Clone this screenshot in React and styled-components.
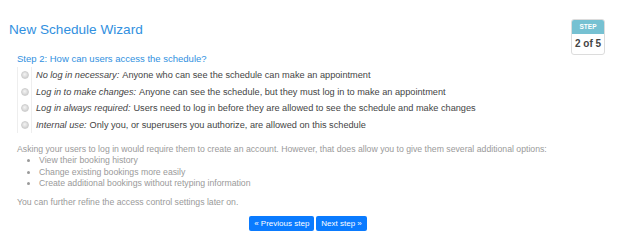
import React from "react";
import styled, { createGlobalStyle } from "styled-components";

const Global = createGlobalStyle`
  html, body { margin: 0; padding: 0; background: #fff; }
  body { font-family: "Liberation Sans", Arial, sans-serif; }
`;

const Page = styled.div`
  width: 620px;
  height: 247px;
  box-sizing: border-box;
  padding: 19px 15px 0 9px;
`;

const Header = styled.div`
  display: flex;
  justify-content: space-between;
  align-items: flex-start;
  margin-bottom: -2px;
`;

const Title = styled.h1`
  margin: 3px 0 0 0;
  font-weight: normal;
  font-size: 13.6px;
  line-height: 16px;
  color: #3190e0;
`;

const StepBadge = styled.div`
  width: 34px;
  box-sizing: border-box;
  border: 1px solid #dcdcdc;
  border-radius: 3px;
  overflow: hidden;
  text-align: center;
`;

const StepHead = styled.div`
  background: #76c1d2;
  color: #fff;
  font-size: 6.5px;
  font-weight: bold;
  height: 14px;
  line-height: 14px;
`;

const StepBody = styled.div`
  color: #444;
  font-size: 10px;
  font-weight: bold;
  height: 20px;
  line-height: 20px;
`;

const Content = styled.div`
  padding-left: 8px;
`;

const Question = styled.h2`
  margin: 0;
  font-weight: normal;
  font-size: 9.5px;
  line-height: 12px;
  color: #3190e0;
`;

const Options = styled.div`
  margin-top: 1.5px;
  display: flex;
  flex-direction: column;
`;

const Option = styled.label`
  display: flex;
  align-items: center;
  height: 16.7px;
  font-size: 9.2px;
  color: #444;
`;

const RadioCell = styled.span`
  width: 15px;
  height: 100%;
  display: flex;
  align-items: center;
  justify-content: center;
  border-left: 1px solid #eee;
  border-right: 1px solid #eee;
  margin-right: 4px;
  box-sizing: border-box;
`;

const Radio = styled.span`
  width: 6px;
  height: 6px;
  border-radius: 50%;
  background: radial-gradient(circle at 45% 40%, #f4f4f4 0%, #d9d9d9 60%, #c4c4c4 100%);
  border: 0.5px solid #cfcfcf;
`;

const Em = styled.em`
  font-style: italic;
  margin-right: 3px;
`;

const Note = styled.div`
  margin-top: 10px;
  font-size: 8.7px;
  color: #9a9a9a;
`;

const P = styled.p`
  margin: 0;
  line-height: 12px;
`;

const List = styled.ul`
  margin: 0 0 6.5px 0;
  padding-left: 22px;
  line-height: 11.5px;
  list-style: disc;
`;

const Buttons = styled.div`
  display: flex;
  justify-content: center;
  gap: 2px;
  margin-top: 8px;
  padding-right: 6px;
`;

const Button = styled.button`
  background: #0a7bff;
  color: #fff;
  border: 0;
  border-radius: 2px;
  font-family: "Liberation Sans", Arial, sans-serif;
  font-size: 8px;
  height: 15px;
  padding: 0 5px;
`;

const options = [
  ["No log in necessary:", "Anyone who can see the schedule can make an appointment"],
  ["Log in to make changes:", "Anyone can see the schedule, but they must log in to make an appointment"],
  ["Log in always required:", "Users need to log in before they are allowed to see the schedule and make changes"],
  ["Internal use:", "Only you, or superusers you authorize, are allowed on this schedule"],
];

export default function App() {
  return (
    <Page>
      <Global />
      <Header>
        <Title>New Schedule Wizard</Title>
        <StepBadge>
          <StepHead>STEP</StepHead>
          <StepBody>2 of 5</StepBody>
        </StepBadge>
      </Header>
      <Content>
        <Question>Step 2: How can users access the schedule?</Question>
        <Options>
          {options.map(([a, b]) => (
            <Option key={a}>
              <RadioCell><Radio /></RadioCell>
              <Em>{a}</Em>
              {b}
            </Option>
          ))}
        </Options>
        <Note>
          <P>Asking your users to log in would require them to create an account. However, that does allow you to give them several additional options:</P>
          <List>
            <li>View their booking history</li>
            <li>Change existing bookings more easily</li>
            <li>Create additional bookings without retyping information</li>
          </List>
          <P>You can further refine the access control settings later on.</P>
        </Note>
        <Buttons>
          <Button>« Previous step</Button>
          <Button>Next step »</Button>
        </Buttons>
      </Content>
    </Page>
  );
}
